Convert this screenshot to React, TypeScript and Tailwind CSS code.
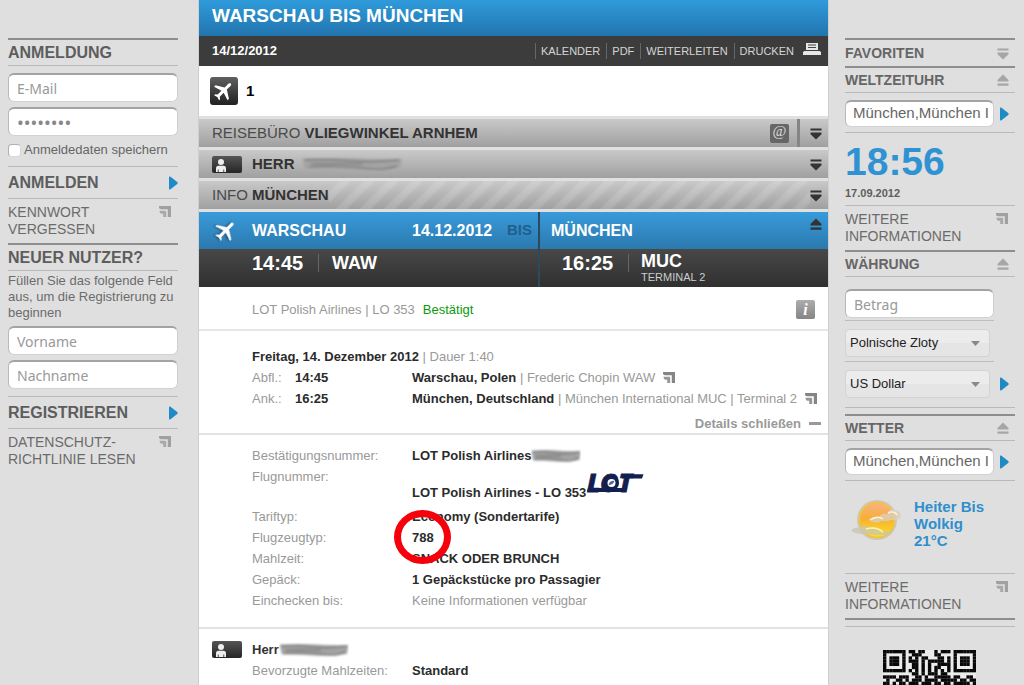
import React from "react";
import { MdFlight } from "react-icons/md";

const QR_ROWS = [
  "11111110110110001011101111111",
  "10000010011100001100001000001",
  "10111010101011000110101011101",
  "10111010111010111110101011101",
  "10111010011010100111101011101",
  "10000010011010101100101000001",
  "11111110101010101010101111111",
  "00000000011010111011000000000",
  "11110111001101001111101100110",
  "01001101011101111011111011011",
  "11010110111011101101101111101",
  "00111001011110011110110011010",
];

function CornerIcon({ dark = false }: { dark?: boolean }) {
  return (
    <svg width="12" height="11" viewBox="0 0 12 11" className={dark ? "block shrink-0 text-[#858585]" : "block shrink-0 text-[#a0a0a0]"} aria-hidden="true">
      <path d="M0 0H12V11H8.8V3.2H2Q0 3.2 0 1.4Z" fill="currentColor" />
      <path d="M0.5 4.8H6Q7.2 4.8 7.2 6V11H4.2V7.8H2.2Q0.5 7.4 0.5 4.8Z" fill="currentColor" opacity="0.85" />
    </svg>
  );
}

function BlueArrow() {
  return (
    <svg width="9" height="14" viewBox="0 0 9 14" aria-hidden="true">
      <path d="M0 1.2Q0 0 1.2 0.6L8.2 6Q9.2 7 8.2 8L1.2 13.4Q0 14 0 12.8Z" fill="#1f8bc6" />
    </svg>
  );
}

function Toggle({ up = false, dark = false, label }: { up?: boolean; dark?: boolean; label: string }) {
  return (
    <button type="button" aria-label={label} className={dark ? "text-[#333]" : "text-[#a6a6a6]"}>
      <svg width="12" height="13" viewBox="0 0 12 13" className="block">
        {up ? (
          <path d="M6 0.5L11.5 5.9V7.5H0.5V5.9ZM0.5 9.5H11.5V11.7H0.5Z" fill="currentColor" />
        ) : (
          <path d="M0.5 1.5H11.5V3.5H0.5ZM0.5 5.5H11.5V7.3L6 12.5L0.5 7.3Z" fill="currentColor" />
        )}
      </svg>
    </button>
  );
}

function PersonIcon() {
  return (
    <svg width="30" height="17" viewBox="0 0 30 17" className="shrink-0" aria-hidden="true">
      <defs>
        <linearGradient id="card" x1="0" y1="0" x2="0" y2="1">
          <stop offset="0" stopColor="#555" />
          <stop offset="1" stopColor="#252525" />
        </linearGradient>
      </defs>
      <rect width="30" height="17" rx="2" fill="url(#card)" />
      <circle cx="9" cy="6" r="3" fill="#eee" />
      <path d="M4 16V12.5Q4 9.8 6.5 9.8H11.5Q14 9.8 14 12.5V16H12.2V13.4H11.4V16H6.6V13.4H5.8V16Z" fill="#eee" />
    </svg>
  );
}

function Smudge({ width, id }: { width: number; id: string }) {
  return (
    <svg width={width} height="16" viewBox="0 0 100 16" preserveAspectRatio="none" className="inline-block shrink-0 align-middle" aria-hidden="true">
      <defs>
        <filter id={id} x="-5%" y="-30%" width="110%" height="160%">
          <feGaussianBlur stdDeviation="1.6 1.2" />
        </filter>
      </defs>
      <g filter={"url(#" + id + ")"}>
        <path d="M1 2.5Q30 1.5 52 2.5T99 3L97 12Q70 14.5 48 13.5T4 12.5Z" fill="#a3a3a3" />
        <path d="M4 4Q30 3 50 5T96 4M10 8Q40 7 60 8M8 11Q40 9 60 12T94 10" stroke="#808080" strokeWidth="1.5" fill="none" />
      </g>
    </svg>
  );
}

const fieldClass =
  "block w-full rounded-md border border-t-2 border-[#b9b9b9] border-t-[#a3a3a3] border-r-[#cfcfcf] border-b-[#d2d2d2] bg-white outline-none";

function Field({ label, type = "text", value }: { label: string; type?: string; value?: string }) {
  return (
    <input
      type={type}
      aria-label={label}
      placeholder={label}
      defaultValue={value}
      className={
        fieldClass +
        (type === "password" ? " text-[18px] text-[#888]" : " text-[14px] text-[#777]") +
        " h-[29px] px-2 font-['Noto_Sans',sans-serif] placeholder:text-[#999]"
      }
    />
  );
}

function LinkBlock({ first, second }: { first: string; second: string }) {
  return (
    <a href="#" className="flex h-[45px] justify-between border-t border-[#b9b9b9] pt-[5px] pr-[7px] text-[14px] leading-[17px] text-[#6b6b6b]">
      <span>
        {first}
        <br />
        {second}
      </span>
      <span className="pt-[2px]">
        <CornerIcon />
      </span>
    </a>
  );
}

function ActionRow({ children }: { children: React.ReactNode }) {
  return (
    <button type="button" className="flex h-8 w-full items-center justify-between border-t border-[#b9b9b9] text-left text-[16px] font-bold text-[#5d5d5d]">
      {children}
      <BlueArrow />
    </button>
  );
}

function LeftHeading({ children }: { children: React.ReactNode }) {
  return (
    <h2 className="flex h-7 items-center border-t-2 border-b border-t-[#8e8e8e] border-b-[#b9b9b9] text-[16px] font-bold text-[#5d5d5d]">{children}</h2>
  );
}

function LeftSidebar() {
  return (
    <aside className="border-r border-[#cfcfcf] pt-[38px] pr-5 pl-2">
      <form>
        <LeftHeading>ANMELDUNG</LeftHeading>
        <div className="flex flex-col gap-[5px] pt-[7px]">
          <Field label="E-Mail" />
          <Field label="Passwort" type="password" value="12345678" />
        </div>
        <label className="flex h-[30px] items-center gap-[3px] pb-[2px] text-[13px] whitespace-nowrap text-[#666]">
          <input type="checkbox" className="size-[13px] shrink-0 appearance-none rounded-[4px] border border-[#b0b0b0] border-r-[#d8d8d8] border-b-[#d8d8d8] bg-white" />
          Anmeldedaten speichern
        </label>
        <ActionRow>ANMELDEN</ActionRow>
        <LinkBlock first="KENNWORT" second="VERGESSEN" />
      </form>
      <form>
        <LeftHeading>NEUER NUTZER?</LeftHeading>
        <p className="pt-[2px] text-[13px] leading-4 whitespace-nowrap text-[#6b6b6b]">
          Füllen Sie das folgende Feld
          <br />
          aus, um die Registrierung zu
          <br />
          beginnen
        </p>
        <div className="flex flex-col gap-[5px] pt-[5px] pb-[7px]">
          <Field label="Vorname" />
          <Field label="Nachname" />
        </div>
        <ActionRow>REGISTRIEREN</ActionRow>
        <LinkBlock first="DATENSCHUTZ-" second="RICHTLINIE LESEN" />
      </form>
    </aside>
  );
}

function RightHeading({ children, open = true }: { children: string; open?: boolean }) {
  return (
    <h2
      className={
        (open ? "h-[27px] border-b" : "h-7") +
        " flex items-center justify-between border-t-2 border-t-[#8e8e8e] border-b-[#b9b9b9] pr-1.5 text-[14px] font-bold text-[#666]"
      }
    >
      {children}
      <Toggle up={open} label={children} />
    </h2>
  );
}

function CityField({ label }: { label: string }) {
  return (
    <div className="flex h-[39px] items-center gap-1.5 pt-[2px]">
      <input
        aria-label={label}
        defaultValue="München,München I"
        className={fieldClass + " h-[27px] min-w-0 flex-1 pr-1 pl-[7px] pb-1 text-[15px] text-[#666]"}
      />
      <button type="button" aria-label="Anzeigen" className="mr-[6px]">
        <BlueArrow />
      </button>
    </div>
  );
}

function Currency({ label, value }: { label: string; value: string }) {
  return (
    <div className="relative mr-1 flex-1">
      <select
        aria-label={label}
        className="block h-7 w-full appearance-none rounded border border-[#d3d3d3] bg-linear-to-b from-[#ececec] from-50% to-[#e5e5e5] to-50% pl-1 text-[13px] text-[#222]"
      >
        <option>{value}</option>
      </select>
      <svg width="9" height="5" viewBox="0 0 9 5" className="pointer-events-none absolute top-3 right-[10px]" aria-hidden="true">
        <path d="M0 0H9L4.5 5Z" fill="#888" />
      </svg>
    </div>
  );
}

function WeatherIcon() {
  return (
    <svg width="56" height="46" viewBox="0 0 56 46" aria-hidden="true">
      <defs>
        <linearGradient id="sun" x1="0" y1="0" x2="0" y2="1">
          <stop offset="0" stopColor="#f6b48a" />
          <stop offset="0.45" stopColor="#f9ad35" />
          <stop offset="1" stopColor="#fbe618" />
        </linearGradient>
        <filter id="soft">
          <feGaussianBlur stdDeviation="0.6" />
        </filter>
      </defs>
      <g filter="url(#soft)">
        <circle cx="27" cy="22" r="20" fill="#cfc7b4" />
        <circle cx="27" cy="22" r="17.5" fill="url(#sun)" stroke="#f2c33c" strokeWidth="1.5" />
        <path d="M19 22Q22 17 29 19Q32 14 37 16Q40 9 45 12Q52 13 51 19Q48 23 41 22Q37 24 32 23Q26 27 19 22Z" fill="#dccfb8" opacity="0.8" />
        <path d="M20 22Q28 17 33 21M38 15Q44 12 47 17" stroke="#fff3dc" strokeWidth="1.4" fill="none" />
        <path d="M1 33Q4 28 9 30Q13 26 19 29Q26 28 32 33Q38 32 41 35Q29 39 19 36Q9 37 1 33Z" fill="#c9c7b4" opacity="0.8" />
        <path d="M16 31Q26 28 33 34" stroke="#fff7a0" strokeWidth="1.5" fill="none" />
      </g>
    </svg>
  );
}

function RightSidebar() {
  return (
    <aside className="border-l border-[#d0d0d0] pt-[38px] pr-[9px] pl-4">
      <RightHeading open={false}>FAVORITEN</RightHeading>
      <section>
        <RightHeading>WELTZEITUHR</RightHeading>
        <CityField label="Stadt" />
        <div className="border-t border-[#b9b9b9] pt-[9px] pb-1 font-bold">
          <p className="text-[39px] leading-10 text-[#2f93d3]">18:56</p>
          <p className="pt-[3px] text-[11px] leading-4 text-[#5d5d5d]">17.09.2012</p>
        </div>
        <LinkBlock first="WEITERE" second="INFORMATIONEN" />
      </section>
      <section>
        <RightHeading>WÄHRUNG</RightHeading>
        <div className="mr-[21px] border-b border-[#bdbdbd] pt-3 pb-[2px]">
          <Field label="Betrag" />
        </div>
        <div className="mr-[21px] flex border-b border-[#bdbdbd] pt-2 pb-1">
          <Currency label="Von" value="Polnische Zloty" />
        </div>
        <div className="mb-1.5 flex items-center border-b border-[#b9b9b9] pt-2 pb-[9px]">
          <Currency label="Nach" value="US Dollar" />
          <button type="button" aria-label="Umrechnen" className="mr-[6px] ml-1.5">
            <BlueArrow />
          </button>
        </div>
      </section>
      <section>
        <RightHeading>WETTER</RightHeading>
        <CityField label="Wetter Stadt" />
        <div className="flex h-[93px] gap-[8px] border-t border-[#b9b9b9] pt-[17px] pl-[5px]">
          <WeatherIcon />
          <p className="text-[15px] leading-[17px] font-bold text-[#2f8fce]">
            Heiter Bis
            <br />
            Wolkig
            <br />
            21°C
          </p>
        </div>
        <LinkBlock first="WEITERE" second="INFORMATIONEN" />
      </section>
      <div className="h-[9px] border-t-2 border-b border-t-[#8e8e8e] border-b-[#b9b9b9]" />
      <svg width="93" height="38" viewBox="0 0 29 12" preserveAspectRatio="none" className="mt-[23px] ml-[38px]" role="img" aria-label="QR-Code">
        <rect width="29" height="12" fill="#ececec" />
        {QR_ROWS.map((row, y) =>
          row.split("").map((cell, x) => (cell === "1" ? <rect key={x + "-" + y} x={x} y={y} width="1.05" height="1.05" fill="#080808" /> : null)),
        )}
      </svg>
    </aside>
  );
}

const barClass =
  "flex h-[31px] items-center border-t-[3px] border-[#e0e0e0] bg-linear-to-b from-[#c9c9c9] to-[#a0a0a0] bg-clip-padding pr-1.5 pl-[13px] text-[15px] text-[#4a4a4a]";

function SummaryBars() {
  return (
    <div>
      <div className={barClass}>
        <h2 className="flex-1">
          REISEBÜRO <b className="text-[#333]">VLIEGWINKEL ARNHEM</b>
        </h2>
        <button type="button" aria-label="E-Mail senden" className="mr-2 flex size-[19px] items-center justify-center rounded-[2px] bg-[#666] pb-[3px] font-['Liberation_Serif',serif] text-[15px] leading-none text-[#ddd]">
          @
        </button>
        <span className="mr-[10px] h-full w-[3px] bg-[#858585]" />
        <Toggle dark label="Reisebüro öffnen" />
      </div>
      <div className={barClass}>
        <PersonIcon />
        <h2 className="flex flex-1 items-center gap-1.5 pl-[10px] font-bold text-[#333]">
          HERR
          <Smudge width={102} id="smudge-a" />
        </h2>
        <Toggle dark label="Reisenden öffnen" />
      </div>
      <div className={barClass}>
        <h2 className="shrink-0">
          INFO <b className="text-[#333]">MÜNCHEN</b>
        </h2>
        <span className="h-full flex-1 bg-[repeating-linear-gradient(135deg,rgba(255,255,255,0)_0px,rgba(255,255,255,0)_6px,rgba(255,255,255,0.14)_9px,rgba(255,255,255,0.14)_14px,rgba(255,255,255,0)_17px)]" />
        <Toggle dark label="Info öffnen" />
      </div>
    </div>
  );
}

const darkClass = "flex h-[38px] bg-linear-to-b from-[#484848] to-[#303030] pt-[2px] text-white";
const blueClass = "flex h-[37px] items-center bg-linear-to-b from-[#389bdb] to-[#2b79ae] text-[16px] font-bold text-white";

function FlightHeader() {
  return (
    <div className="grid grid-cols-[339fr_290fr] border-t-[3px] border-[#e0e0e0]">
      <div>
        <div className={blueClass}>
          <span className="flex w-[53px] shrink-0 justify-center">
            <MdFlight className="size-[26px] rotate-45 drop-shadow-[-1px_1px_1px_rgba(0,0,0,0.5)]" />
          </span>
          <span className="w-40 shrink-0">WARSCHAU</span>
          <span className="w-[95px] shrink-0">14.12.2012</span>
          <span className="text-[15px] text-[#205f8c]">BIS</span>
        </div>
        <div className={darkClass + " pl-[53px]"}>
          <b className="w-[66px] text-[20px] leading-6">14:45</b>
          <span className="mt-[3px] h-[18px] border-l border-[#666]" />
          <b className="pl-[13px] text-[18px] leading-6">WAW</b>
        </div>
      </div>
      <div className="border-l-[2px] border-[#2b4a5e]">
        <div className={blueClass + " justify-between pr-1.5 pl-[11px]"}>
          MÜNCHEN
          <span className="pb-[9px]">
            <Toggle up dark label="Flug schließen" />
          </span>
        </div>
        <div className={darkClass + " pl-[22px]"}>
          <b className="w-[66px] text-[20px] leading-6">16:25</b>
          <span className="mt-[3px] h-[18px] border-l border-[#666]" />
          <div className="pl-3">
            <b className="block text-[18px] leading-5">MUC</b>
            <span className="block text-[11px] leading-[13px] text-[#ccc]">TERMINAL 2</span>
          </div>
        </div>
      </div>
    </div>
  );
}

function LotLogo() {
  return (
    <svg width="62" height="36" viewBox="0 -5 62 36" className="mb-[5px] block shrink-0" role="img" aria-label="LOT">
      <path d="M1 22L2 18H41L40 22Z" fill="#121f4f" />
      <text x="1" y="22" fontFamily="Open Sans, sans-serif" fontWeight="800" fontStyle="italic" fontSize="25" fill="#121f4f" stroke="#121f4f" strokeWidth="0.8">
        LOT
      </text>
      <path d="M36 4.2H57.5L56 8.5H36Z" fill="#121f4f" />
      <circle cx="25.5" cy="13" r="7.5" fill="#121f4f" />
      <circle cx="25.5" cy="13" r="4" fill="#fff" />
      <path d="M22.5 15Q23.5 10.5 28.5 10.8Q27.5 15 22.5 15Z" fill="#5b6690" />
    </svg>
  );
}

function Details() {
  const label = "text-[#999]";
  const value = "font-bold text-[#2b2b2b]";
  return (
    <dl className="grid grid-cols-[160px_1fr] border-b-2 border-[#e2e2e2] pt-[10px] pb-4 pl-[53px] leading-[21px]">
      <dt className={label}>Bestätigungsnummer:</dt>
      <dd className={value + " flex items-center"}>
        LOT Polish Airlines
        <Smudge width={50} id="smudge-b" />
      </dd>
      <dt className={label}>Flugnummer:</dt>
      <dd className={value + " flex h-10 items-end"}>
        <span className="pb-[3px]">LOT Polish Airlines - LO 353</span>
        <LotLogo />
      </dd>
      <dt className={label}>Tariftyp:</dt>
      <dd className={value}>Economy (Sondertarife)</dd>
      <dt className={label}>Flugzeugtyp:</dt>
      <dd className={value + " relative"}>
        788
        <span className="absolute -top-[17px] -left-[18px] h-[54px] w-[57px] rounded-[50%] border-7 border-[#f5000b]" />
      </dd>
      <dt className={label}>Mahlzeit:</dt>
      <dd className={value}>SNACK ODER BRUNCH</dd>
      <dt className={label}>Gepäck:</dt>
      <dd className={value}>1 Gepäckstücke pro Passagier</dd>
      <dt className={label}>Einchecken bis:</dt>
      <dd className={label}>Keine Informationen verfügbar</dd>
    </dl>
  );
}

function Trip() {
  return (
    <main className="bg-white text-[13px] text-[#999]">
      <h1 className="flex h-9 items-center bg-linear-to-b from-[#2f9bdb] to-[#2275ae] pb-1 pl-[13px] text-[19px] font-bold text-white">WARSCHAU BIS MÜNCHEN</h1>
      <div className="flex h-[30px] items-center bg-[#3c3c3c] pr-[7px] pl-[13px]">
        <b className="flex-1 text-white">14/12/2012</b>
        <nav className="flex items-center text-[11px] leading-4 text-[#d5d5d5]">
          <a href="#" className="border-l border-[#666] pr-1.5 pl-[5px]">KALENDER</a>
          <a href="#" className="border-l border-[#666] pr-1.5 pl-[5px]">PDF</a>
          <a href="#" className="border-l border-[#666] pr-1.5 pl-[5px]">WEITERLEITEN</a>
          <a href="#" className="flex items-center gap-[9px] border-l border-[#666] pl-[5px]">
            DRUCKEN
            <svg width="18" height="12" viewBox="0 0 18 12" className="mb-1" aria-hidden="true">
              <path d="M3 0H15V7H3Z" fill="#e6e6e6" />
              <path d="M5 2H13M5 4.5H13" stroke="#444" strokeWidth="1.2" />
              <path d="M1.5 8H16.5L18 9V12H0V9Z" fill="#e6e6e6" />
            </svg>
          </a>
        </nav>
      </div>
      <div className="flex h-[50px] items-center gap-2 pl-[11px]">
        <span className="flex size-7 items-center justify-center rounded-[3px] bg-linear-to-b from-[#606060] to-[#222] text-white">
          <MdFlight className="size-6 rotate-45" />
        </span>
        <b className="text-[15px] text-black">1</b>
      </div>
      <SummaryBars />
      <FlightHeader />
      <div className="flex h-11 items-center border-b-2 border-[#e6e6e6] pt-[3px] pr-[13px] pl-[53px]">
        <span>LOT Polish Airlines | LO 353</span>
        <span className="flex-1 pl-2 text-[#0a9a0a]">Bestätigt</span>
        <button type="button" aria-label="Information" className="flex size-[19px] items-center justify-center rounded-[2px] bg-linear-to-b from-[#adadad] to-[#858585] font-['Liberation_Serif',serif] text-[16px] leading-none font-bold text-white italic">
          i
        </button>
      </div>
      <section className="border-b-2 border-[#e2e2e2] pt-[15px] pl-[53px] leading-[21px]">
        <p>
          <b className="text-[#2b2b2b]">Freitag, 14. Dezember 2012</b> | Dauer 1:40
        </p>
        <div className="grid grid-cols-[43px_117px_1fr] whitespace-nowrap">
          <span>Abfl.:</span>
          <b className="text-[#2b2b2b]">14:45</b>
          <span className="flex items-center gap-2">
            <span>
              <b className="text-[#2b2b2b]">Warschau, Polen</b> | Frederic Chopin WAW
            </span>
            <CornerIcon dark />
          </span>
          <span>Ank.:</span>
          <b className="text-[#2b2b2b]">16:25</b>
          <span className="flex items-center gap-2">
            <span>
              <b className="text-[#2b2b2b]">München, Deutschland</b> | München International MUC | Terminal 2
            </span>
            <CornerIcon dark />
          </span>
        </div>
        <button type="button" className="mt-1 ml-auto flex h-5 items-center gap-2 pr-[7px] font-bold">
          Details schließen
          <span className="h-[3px] w-3 bg-[#999]" />
        </button>
      </section>
      <Details />
      <section className="grid grid-cols-[40px_160px_1fr] pt-[10px] pl-[13px] leading-[21px]">
        <span className="flex items-center">
          <PersonIcon />
        </span>
        <h3 className="col-span-2 flex items-center font-bold text-[#333]">
          Herr
          <Smudge width={70} id="smudge-c" />
        </h3>
        <span className="col-start-2">Bevorzugte Mahlzeiten:</span>
        <b className="text-[#2b2b2b]">Standard</b>
      </section>
    </main>
  );
}

export default function App() {
  return (
    <div className="grid h-screen grid-cols-[199px_minmax(0,1fr)_196px] overflow-hidden bg-[#dfdfdf] font-['Liberation_Sans',Arial,sans-serif]">
      <LeftSidebar />
      <Trip />
      <RightSidebar />
    </div>
  );
}
